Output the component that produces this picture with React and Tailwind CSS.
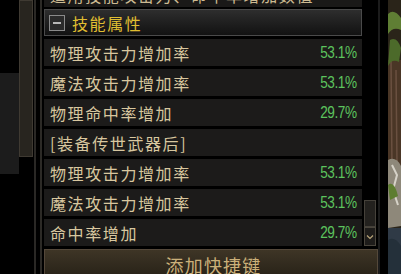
import React from 'react';

const font = { fontFamily: '"Noto Sans CJK SC", "Noto Sans", sans-serif' };

const rows = [
    { label: '物理攻击力增加率', value: '53.1%' },
    { label: '魔法攻击力增加率', value: '53.1%' },
    { label: '物理命中率增加', value: '29.7%' },
    { label: '[装备传世武器后]', value: '' },
    { label: '物理攻击力增加率', value: '53.1%' },
    { label: '魔法攻击力增加率', value: '53.1%' },
    { label: '命中率增加', value: '29.7%' },
];

function Art() {
    return (
        <svg width="13" height="274" viewBox="0 0 13 274" className="block">
            <rect width="13" height="274" fill="#2a2419" />
            <rect y="60" width="13" height="110" fill="#4a3626" />
            <path d="M3 60 L4 170 M8 70 L9 165" stroke="#6a5040" strokeWidth="1.5" />
            <path d="M0 14 Q6 8 13 18 L13 30 Q5 26 0 34 Z" fill="#5f7e34" />
            <path d="M2 40 Q9 36 13 48 L11 62 Q4 58 0 66 Z" fill="#4c6a2a" />
            <path d="M0 160 Q8 156 13 166 L13 226 L0 228 Z" fill="#8e887a" />
            <path d="M4 165 L9 175 L5 190 L10 205" stroke="#d6d2c8" strokeWidth="2" fill="none" />
            <path d="M0 185 Q6 180 10 196 L2 200 Z" fill="#5d7d30" />
            <rect y="228" width="13" height="46" fill="#2f3a46" />
            <path d="M0 240 Q7 236 13 246 L13 274 L0 274 Z" fill="#24303a" />
        </svg>
    );
}

function MinusBox() {
    return (
        <div className="w-[16px] h-[16px] border border-[#8a8a8a] bg-[#2b2b2b] flex items-center justify-center">
            <div className="w-[8px] h-[2px] bg-[#b8b8b8]" />
        </div>
    );
}

export default function App() {
    return (
        <div className="w-[401px] h-[274px] overflow-hidden bg-black flex" style={font}>
            {/* left leftovers */}
            <div className="w-[19px] flex flex-col">
                <div className="h-[73px]" />
                <div className="h-[101px] bg-[#1c1c1c]" />
            </div>
            <div className="w-[14px]">
                <div className="h-[157px] bg-[#28251f] border border-[#3f3a32]" />
            </div>
            <div className="w-[1px]" />
            <div className="w-[2px] bg-[#2a2825]" />
            <div className="w-[4px]" />
            <div className="w-[2px] bg-[#2c2a26]" />
            <div className="w-[2px]" />

            {/* main panel */}
            <div className="w-[334px] flex flex-col">
                <div className="flex">
                    <div className="w-[318px] flex flex-col">
                        <div className="h-[7px] overflow-hidden bg-[#1a1918]">
                            <div className="mt-[-13px] pl-[6px] text-[16px] leading-[16px] tracking-[1.6px] text-[#cdbb92] whitespace-nowrap">
                                适用技能攻击力、命中率增加数值
                            </div>
                        </div>
                        <div className="mt-[2px] h-[27px] border border-[#4a4a4a] bg-gradient-to-b from-[#2e2e2e] to-[#121212] flex items-center pl-[4px]">
                            <MinusBox />
                            <span className="ml-[7px] text-[16px] leading-none tracking-[1.6px] text-[#e0be32]">技能属性</span>
                        </div>
                        {rows.map((r, i) => (
                            <div key={i} className="mt-[3px] h-[27px] bg-[#1c1b1a] flex items-center justify-between pl-[6px] pr-[5px]">
                                <span className="text-[16px] leading-none tracking-[1.6px] text-[#d8c79f]">{r.label}</span>
                                <span
                                    className="inline-block origin-right scale-x-[0.8] text-[17px] leading-none tracking-[-0.5px] text-[#5cc35e]"
                                    style={{ fontFamily: '"Liberation Sans", sans-serif' }}
                                >
                                    {r.value}
                                </span>
                            </div>
                        ))}
                    </div>
                    <div className="w-[2px]" />
                    {/* scrollbar */}
                    <div className="w-[12px] flex flex-col justify-end">
                        <div className="h-[27px] bg-[#23211e] border border-[#45413a]" />
                        <div className="h-[19px] bg-[#1e1c1a] border border-[#4a453c] flex items-center justify-center">
                            <svg width="8" height="6" viewBox="0 0 8 6">
                                <path d="M1 1.5 L4 4.5 L7 1.5" stroke="#b9a57a" strokeWidth="1.2" fill="none" />
                            </svg>
                        </div>
                    </div>
                    <div className="w-[2px]" />
                </div>
                <div className="mt-[3px] h-[30px] border-t border-x border-[#54483a] bg-gradient-to-b from-[#3e3526] to-[#2a2419] flex justify-center pt-[6px] pl-[5px]">
                    <span className="text-[18px] leading-[18px] tracking-[1.2px] text-[#cbb079]">添加快捷键</span>
                </div>
            </div>

            <div className="w-[2px] bg-[#1c1c1c]" />
            <div className="w-[8px]" />
            <Art />
        </div>
    );
}
